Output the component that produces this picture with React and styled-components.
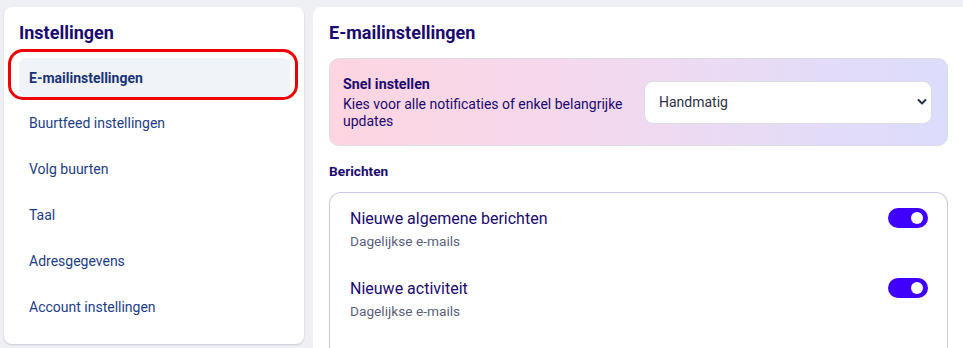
import React from 'react';
import styled, { createGlobalStyle } from 'styled-components';

const GlobalStyle = createGlobalStyle`
  html, body {
    margin: 0;
    padding: 0;
    background: #eef0f4;
    font-family: Roboto, "Noto Sans", Arial, sans-serif;
    overflow: hidden;
  }
`;

const Page = styled.div`
  display: flex;
  gap: 9px;
  padding: 7px 0 0 4px;
  height: 348px;
  box-sizing: border-box;
`;

const Sidebar = styled.aside`
  width: 300px;
  height: 337px;
  flex-shrink: 0;
  background: #fff;
  border-radius: 8px;
  box-shadow: 0 1px 2px rgba(20, 20, 60, 0.18);
  box-sizing: border-box;
  padding: 14px 0 0 4px;
`;

const Heading = styled.h2`
  margin: 0 0 4px 11px;
  font-size: 18px;
  font-weight: 700;
  color: #1b0a6e;
  line-height: 24px;
`;

const PageTitle = styled(Heading).attrs({ as: 'h1' })`
  margin: 0;
`;

const NavList = styled.nav`
  display: flex;
  flex-direction: column;
`;

const Highlight = styled.div`
  border: 3px solid #ee0000;
  border-radius: 15px;
  width: 290px;
  height: 51px;
  box-sizing: border-box;
  padding: 6px 5px 0 8px;
`;

const NavItem = styled.a`
  display: flex;
  align-items: center;
  height: ${p => (p.$active ? '39px' : '46px')};
  width: 271px;
  box-sizing: border-box;
  padding-left: ${p => (p.$active ? '10px' : '21px')};
  border-radius: 7px;
  background: ${p => (p.$active ? '#f0f3f8' : 'transparent')};
  font-size: 14px;
  font-weight: ${p => (p.$active ? 700 : 400)};
  color: ${p => (p.$active ? '#193375' : '#1d3d86')};
  text-decoration: none;
`;

const Main = styled.main`
  flex: 1;
  background: #fff;
  border-radius: 8px 0 0 0;
  padding: 14px 15px 0 16px;
  box-sizing: border-box;
`;

const QuickSetup = styled.section`
  display: flex;
  align-items: center;
  justify-content: space-between;
  height: 88px;
  box-sizing: border-box;
  margin-top: 13px;
  padding: 0 15px 0 13px;
  border: 1px solid #dcdce4;
  border-radius: 10px;
  background: linear-gradient(90deg, #fed5e1 0%, #f3d9ef 45%, #e3dcf8 80%, #dcdcfc 100%);
`;

const QuickText = styled.div`
  display: flex;
  flex-direction: column;
  width: 300px;
`;

const QuickTitle = styled.div`
  font-size: 14.3px;
  font-weight: 700;
  color: #1b0a6e;
  line-height: 20px;
`;

const QuickDesc = styled.div`
  font-size: 14px;
  color: #1b0a6e;
  line-height: 17px;
  margin-top: 2px;
`;

const SelectBox = styled.div`
  position: relative;
  width: 288px;
  height: 43px;
`;

const Select = styled.select`
  appearance: none;
  width: 100%;
  height: 100%;
  border: 1px solid #dcdce4;
  border-radius: 9px;
  background: #fff;
  padding: 0 14px;
  font-family: inherit;
  font-size: 14px;
  color: #2f3145;
  outline: none;
`;

const Chevron = styled.svg`
  position: absolute;
  right: 5px;
  top: 17px;
  width: 10px;
  height: 8px;
  pointer-events: none;
`;

const SectionLabel = styled.div`
  margin-top: 17px;
  font-size: 13.7px;
  font-weight: 700;
  color: #1b0a6e;
  line-height: 16px;
`;

const Card = styled.div`
  margin-top: 13px;
  border: 1px solid #cbc7e6;
  border-bottom: none;
  border-radius: 12px 12px 0 0;
  padding: 16px 19px 0 20px;
  height: 200px;
`;

const Row = styled.div`
  display: flex;
  justify-content: space-between;
  align-items: flex-start;
  height: 70px;
`;

const RowText = styled.div`
  display: flex;
  flex-direction: column;
`;

const RowTitle = styled.div`
  font-size: 16px;
  color: #1b0a6e;
  line-height: 20px;
`;

const RowSub = styled.div`
  font-size: 13.7px;
  color: #5c5f7c;
  line-height: 17px;
  margin-top: 4px;
`;

const Toggle = styled.span`
  position: relative;
  width: 40px;
  height: 20px;
  margin-top: -1px;
  border-radius: 10px;
  background: ${p => (p.$on ? '#3f00ff' : '#c9c9d6')};
  &::after {
    content: '';
    position: absolute;
    top: 4px;
    ${p => (p.$on ? 'right: 5px;' : 'left: 5px;')}
    width: 12px;
    height: 12px;
    border-radius: 50%;
    background: #fff;
  }
`;

const navItems = ['Buurtfeed instellingen', 'Volg buurten', 'Taal', 'Adresgegevens', 'Account instellingen'];

const rows = [
  { title: 'Nieuwe algemene berichten', sub: 'Dagelijkse e-mails' },
  { title: 'Nieuwe activiteit', sub: 'Dagelijkse e-mails' },
];

export default function App() {
  return (
    <>
      <GlobalStyle />
      <Page>
        <Sidebar>
          <Heading>Instellingen</Heading>
          <NavList>
            <Highlight>
              <NavItem $active>E-mailinstellingen</NavItem>
            </Highlight>
            {navItems.map(item => (
              <NavItem key={item}>{item}</NavItem>
            ))}
          </NavList>
        </Sidebar>
        <Main>
          <PageTitle>E-mailinstellingen</PageTitle>
          <QuickSetup>
            <QuickText>
              <QuickTitle>Snel instellen</QuickTitle>
              <QuickDesc>Kies voor alle notificaties of enkel belangrijke updates</QuickDesc>
            </QuickText>
            <SelectBox>
              <Select defaultValue="handmatig">
                <option value="handmatig">Handmatig</option>
                <option value="alle">Alle notificaties</option>
                <option value="belangrijk">Enkel belangrijke updates</option>
              </Select>
              <Chevron viewBox="0 0 10 8">
                <path d="M1.5 2 L5 5.5 L8.5 2" fill="none" stroke="#2f3145" strokeWidth="2" strokeLinecap="round" strokeLinejoin="round" />
              </Chevron>
            </SelectBox>
          </QuickSetup>
          <SectionLabel>Berichten</SectionLabel>
          <Card>
            {rows.map(r => (
              <Row key={r.title}>
                <RowText>
                  <RowTitle>{r.title}</RowTitle>
                  <RowSub>{r.sub}</RowSub>
                </RowText>
                <Toggle $on />
              </Row>
            ))}
          </Card>
        </Main>
      </Page>
    </>
  );
}
